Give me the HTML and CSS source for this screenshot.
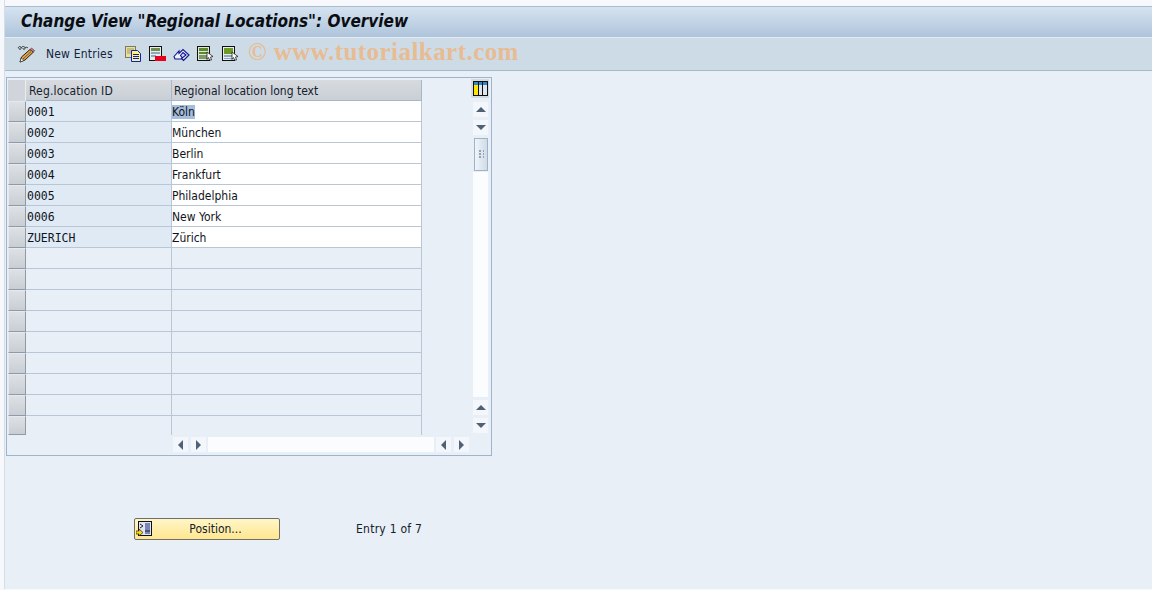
FILE: index.html
```html
<!DOCTYPE html>
<html lang="en">
<head>
<meta charset="utf-8">
<title>Change View "Regional Locations": Overview</title>
<link rel="stylesheet" href="styles.css">
</head>
<body>
<div class="screen">
  <header class="title-bar"><h1>Change View "Regional Locations": Overview</h1></header>
  <nav class="toolbar">
    <svg class="ico pencil" width="18" height="18" viewBox="0 0 18 18"><path d="M1 3c1-2 3-2 3 0s-2 2-2 0M4 3c1-2 4-2 4 0s-2 2-2 0M8 3c1-1 2-1 3 0" fill="none" stroke="#333" stroke-width="1"/><path d="M3 17l1.500-5L13 4.500 16.500 7 8 15z" fill="#f5a020" stroke="#222" stroke-width="1"/><path d="M6 14l8-7.500" stroke="#3a62c8" stroke-width="1"/><path d="M13 4.500l3.500 2.500 1-1.500L14.500 3z" fill="#e8748a" stroke="#333" stroke-width=".6"/><path d="M3 17l1.200-4 2.800 2.500z" fill="#fff" stroke="#222" stroke-width=".6"/></svg>
    <span class="tool-label">New Entries</span>
    <svg class="ico copy" width="16" height="16" viewBox="0 0 16 16"><rect x=".5" y=".5" width="10" height="11" fill="#efe08a" stroke="#777"/><path d="M2 3h7M2 5h7M2 7h4" stroke="#9a9a70"/><path d="M6.500 4.500h6l3 3v8h-9z" fill="#fff27a" stroke="#0a1fc8"/><path d="M8 8.500h6M8 10.500h6M8 12.500h6" stroke="#0a1fc8"/></svg>
    <svg class="ico del" width="17" height="16" viewBox="0 0 17 16"><rect x=".5" y=".5" width="12" height="14" fill="#e8eef0" stroke="#111"/><rect x="2" y="2" width="9" height="3" fill="#6f8f4a"/><rect x="2" y="6" width="9" height="2" fill="#8fa6bf"/><rect x="2" y="9" width="5" height="2" fill="#8fa6bf"/><rect x="6" y="10" width="11" height="5" fill="#e8001c"/></svg>
    <svg class="ico undo" width="17" height="16" viewBox="0 0 17 16"><path d="M1 10.500l5-5.500v2.500L10 3.500l6 5.500-5.500 5.500-2-2L13 9 10 6.500 7.500 9.500 9 11.500v1.500H2z" fill="#eef3fb" stroke="#10108f" stroke-width="1.100"/></svg>
    <svg class="ico prev" width="17" height="16" viewBox="0 0 17 16"><rect x=".5" y=".5" width="12" height="14" fill="#dfe8dc" stroke="#111"/><rect x="2" y="2" width="9" height="3" fill="#5d8a2d"/><rect x="2" y="6" width="9" height="2" fill="#5d8a2d"/><rect x="2" y="9" width="9" height="4" fill="#7f9a6a"/><path d="M10 6l6 4.500-2.500.5 1 3-2 0-1-2.500-1.500 2z" fill="#fff" stroke="#222" stroke-width=".8"/></svg>
    <svg class="ico next" width="17" height="16" viewBox="0 0 17 16"><rect x=".5" y=".5" width="12" height="14" fill="#e8eef0" stroke="#111"/><rect x="2" y="2" width="9" height="6" fill="#6d9a22"/><rect x="2" y="9" width="9" height="2" fill="#8fa6bf"/><rect x="2" y="12" width="9" height="1" fill="#8fa6bf"/><path d="M10 6l6 4.500-2.500.5 1 3-2 0-1-2.500-1.500 2z" fill="#fff" stroke="#222" stroke-width=".8"/></svg>
    <span class="watermark">© www.tutorialkart.com</span>
  </nav>
  <main class="content">
    <section class="panel">
      <div class="table-area">
        <div class="grid">
          <div class="corner"></div><div class="th th-id">Reg.location ID</div><div class="th th-text">Regional location long text</div>
          <div class="sel"></div><div class="td id">0001</div><div class="td txt"><span class="mark">Köln</span></div>
          <div class="sel"></div><div class="td id">0002</div><div class="td txt">München</div>
          <div class="sel"></div><div class="td id">0003</div><div class="td txt">Berlin</div>
          <div class="sel"></div><div class="td id">0004</div><div class="td txt">Frankfurt</div>
          <div class="sel"></div><div class="td id">0005</div><div class="td txt">Philadelphia</div>
          <div class="sel"></div><div class="td id">0006</div><div class="td txt">New York</div>
          <div class="sel"></div><div class="td id">ZUERICH</div><div class="td txt">Zürich</div>
          <div class="sel"></div><div class="td empty"></div><div class="td empty"></div>
          <div class="sel"></div><div class="td empty"></div><div class="td empty"></div>
          <div class="sel"></div><div class="td empty"></div><div class="td empty"></div>
          <div class="sel"></div><div class="td empty"></div><div class="td empty"></div>
          <div class="sel"></div><div class="td empty"></div><div class="td empty"></div>
          <div class="sel"></div><div class="td empty"></div><div class="td empty"></div>
          <div class="sel"></div><div class="td empty"></div><div class="td empty"></div>
          <div class="sel"></div><div class="td empty"></div><div class="td empty"></div>
          <div class="sel last"></div><div class="td empty last"></div><div class="td empty last"></div>
        </div>
        <div class="side">
          <div class="config-btn">
            <svg class="config" width="15" height="15" viewBox="0 0 15 15"><rect x=".5" y=".5" width="14" height="14" fill="#fff" stroke="#111"/><rect x="1" y="1" width="13" height="3" fill="#2f86c9"/><rect x="1" y="4" width="4" height="10" fill="#ffe600"/><rect x="6" y="4" width="3" height="10" fill="#dfe6ee"/><rect x="10" y="4" width="4" height="10" fill="#dfe6ee"/><path d="M5.500 1v13M9.500 1v13" stroke="#111"/></svg>
          </div>
          <div class="vscroll">
            <div class="sb-btn"><span class="arrow up"></span></div>
            <div class="sb-btn"><span class="arrow down"></span></div>
            <div class="thumb"><span class="grip"></span></div>
            <div class="v-track"></div>
            <div class="sb-btn"><span class="arrow up"></span></div>
            <div class="sb-btn"><span class="arrow down"></span></div>
          </div>
        </div>
      </div>
      <div class="hscroll">
        <div class="sb-btn"><span class="arrow left"></span></div>
        <div class="sb-btn"><span class="arrow right"></span></div>
        <div class="h-track"></div>
        <div class="sb-btn"><span class="arrow left"></span></div>
        <div class="sb-btn"><span class="arrow right"></span></div>
      </div>
    </section>
    <div class="footer-row">
      <button class="pos-btn" type="button">
        <svg class="pos-ico" width="16" height="16" viewBox="0 0 16 16"><rect x="2.500" y=".5" width="13" height="14" fill="#dfe6f2" stroke="#111"/><rect x="9" y="2" width="5" height="11" fill="#7b86b8"/><path d="M4 3l3 2-3 2M9 10h5" fill="none" stroke="#223"/><path d="M0 10h3V8l4 3.500-4 3.500v-2H0z" fill="#ffd800" stroke="#222" stroke-width=".7"/></svg>
        <span class="pos-label">Position...</span>
      </button>
      <span class="entry">Entry 1 of 7</span>
    </div>
  </main>
</div>
</body>
</html>
```
FILE: styles.css
```css
* { box-sizing: border-box; }
html, body { margin: 0; padding: 0; }
body {
  width: 1152px;
  height: 590px;
  overflow: hidden;
  background: #f6f8fb;
  font-family: "DejaVu Sans", "Liberation Sans", sans-serif;
  font-stretch: condensed;
  font-size: 12px;
  color: #10141c;
}
.screen {
  margin-left: 4px;
  padding-top: 6px;
  height: 589px;
  display: flex;
  flex-direction: column;
  background: linear-gradient(#f6f8fb 0, #f6f8fb 6px, #e8eff6 6px);
  border-left: 1px solid #d5dee8;
}
.title-bar {
  height: 31px;
  flex: none;
  border-top: 1px solid #a9bdd2;
  background: linear-gradient(#d6e3f0, #aec4db);
  display: flex;
  align-items: center;
  padding: 0 0 3px 16px;
}
h1 {
  margin: 0;
  font-family: "DejaVu Sans", "Liberation Sans", sans-serif;
  font-stretch: condensed;
  font-size: 17px;
  font-weight: 700;
  font-style: italic;
  color: #0a0d12;
  white-space: nowrap;
}
.toolbar {
  height: 34px;
  flex: none;
  border-top: 1px solid #e3ebf3;
  border-bottom: 1px solid #a5b9cd;
  background: #cddbe7;
  display: flex;
  align-items: center;
  padding-left: 12px;
}
.ico { flex: none; display: block; }
.tool-label { width: 79px; margin-left: 11px; color: #14233c; line-height: 16px; letter-spacing: .2px; }
.copy { margin-right: 8px; }
.del { margin-right: 7px; }
.undo { margin-right: 7px; }
.prev { margin-right: 8px; }
.next { margin-right: 9px; }
.copy, .del, .undo, .prev, .next { margin-top: -1px; }
.watermark {
  font-family: "Liberation Serif", "Times New Roman", serif;
  font-weight: 700;
  font-size: 25px;
  line-height: 28px;
  margin-top: -4px;
  color: #e8bc93;
  letter-spacing: .45px;
  white-space: nowrap;
}
.content { flex: 1; padding: 6px 0 0 1px; display: flex; flex-direction: column; }
.panel {
  width: 486px;
  height: 379px;
  flex: none;
  border: 1px solid #9db4cc;
  padding: 2px 2px 0 1px;
}
.table-area { display: flex; }
.grid {
  display: grid;
  grid-template-columns: 18px 146px 250px;
  grid-template-rows: 21px repeat(15, 21px) 19px;
  width: 414px;
  flex: none;
}
.corner, .sel {
  background: linear-gradient(#d8dde2, #c4cbd2);
  border-right: 1px solid #8f9aa6;
  border-bottom: 1px solid #8f9aa6;
  border-top: 1px solid #e6eaee;
  border-left: 1px solid #e6eaee;
}
.sel { background: linear-gradient(#dde1e5, #c9ced4); }
.corner { border: 0; border-right: 1px solid #e8edf2; background: #cfd5db; }
.th {
  background: linear-gradient(#d7dbe0, #c9cfd6);
  border-bottom: 1px solid #a9b6c4;
  border-right: 1px solid #a9b6c4;
  padding-left: 2px;
  line-height: 22px;
  color: #14202c;
  white-space: nowrap;
}
.th-id { padding-left: 3px; letter-spacing: .15px; }
.td {
  border-bottom: 1px solid #b9c6d6;
  border-right: 1px solid #b9c6d6;
  line-height: 22px;
  white-space: nowrap;
  overflow: hidden;
}
.id {
  background: #dfeaf4;
  padding-left: 1px;
  font-family: "DejaVu Sans Mono", "Liberation Mono", monospace;
  font-stretch: normal;
  font-size: 11.500px;
}
.txt { background: #fff; }
.empty { background: #e8eff6; }
.td.last { border-bottom: 0; }
.mark { background: #a5bedb; }
.side {
  margin-left: 51px;
  width: 15px;
  flex: none;
  display: flex;
  flex-direction: column;
}
.config-btn {
  width: 18px;
  height: 19px;
  margin: -1px 0 0 -2px;
  background: #d3dbe3;
  display: flex;
  align-items: center;
  justify-content: center;
}
.config { display: block; flex: none; }
.vscroll { display: flex; flex-direction: column; margin-top: 4px; }
.sb-btn {
  width: 15px;
  height: 15px;
  flex: none;
  background: #f3f6fa;
  display: flex;
  align-items: center;
  justify-content: center;
}
.vscroll .sb-btn + .sb-btn { margin-top: 3px; }
.thumb {
  width: 14px;
  height: 33px;
  margin: 3px 0 1px 1px;
  flex: none;
  border: 1px solid #9fb2c6;
  background: linear-gradient(90deg, #f0f4f8, #cfdce8);
  display: flex;
  align-items: center;
  justify-content: center;
}
.grip {
  width: 5px;
  height: 9px;
  background: radial-gradient(circle at 1px 1px, #8fa3b8 1px, transparent 1px) 0 0 / 4px 3px;
}
.v-track { width: 15px; height: 225px; margin-bottom: 3px; flex: none; background: #fbfcfd; }
.arrow { width: 0; height: 0; display: block; border-style: solid; border-color: transparent; }
.arrow.up { border-width: 0 5px 5px; border-bottom-color: #4f6275; }
.arrow.down { border-width: 5px 5px 0; border-top-color: #4f6275; }
.arrow.left { border-width: 5px 5px 5px 0; border-right-color: #4f6275; }
.arrow.right { border-width: 5px 0 5px 5px; border-left-color: #4f6275; }
.hscroll {
  display: flex;
  margin-top: 2px;
  padding-left: 165px;
}
.hscroll .sb-btn { margin-right: 3px; }
.h-track { width: 226px; height: 15px; margin-left: -1px; margin-right: 2px; background: #fbfcfd; }
.footer-row { display: flex; align-items: center; margin-top: 61px; padding-left: 128px; }
.pos-btn {
  width: 146px;
  height: 22px;
  padding: 0;
  border: 1px solid #6f6f6a;
  border-radius: 2px;
  background: linear-gradient(#fff6c8, #ffe68f);
  display: flex;
  align-items: center;
  font: inherit;
  color: #14202c;
}
.pos-ico { flex: none; margin-left: 1px; }
.pos-label { flex: 1; text-align: center; line-height: 22px; }
.entry { margin-left: 76px; color: #14202c; line-height: 24px; letter-spacing: .25px; }
```
